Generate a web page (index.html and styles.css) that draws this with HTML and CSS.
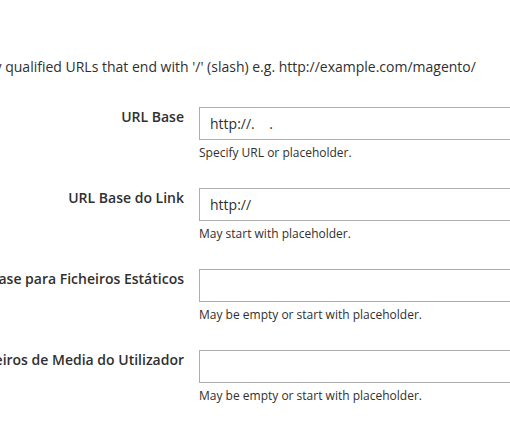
FILE: index.html
```html
<!DOCTYPE html>
<html lang="pt">
<head>
<meta charset="utf-8">
<title>URLs Base</title>
<link rel="stylesheet" href="styles.css">
</head>
<body>
<div class="page">
  <p class="intro">Any of the fields allow fully qualified URLs that end with '/' (slash) e.g. http://example.com/magento/</p>
  <div class="fieldset">
    <div class="field">
      <label class="field-label" for="f1"><span>URL Base</span></label>
      <div class="field-control">
        <input class="input-text" id="f1" type="text" value="http://.    .">
        <div class="note">Specify URL or placeholder.</div>
      </div>
    </div>
    <div class="field">
      <label class="field-label" for="f2"><span>URL Base do Link</span></label>
      <div class="field-control">
        <input class="input-text" id="f2" type="text" value="http://">
        <div class="note">May start with placeholder.</div>
      </div>
    </div>
    <div class="field">
      <label class="field-label" for="f3"><span>URL Base para Ficheiros Estáticos</span></label>
      <div class="field-control">
        <input class="input-text" id="f3" type="text" value="">
        <div class="note">May be empty or start with placeholder.</div>
      </div>
    </div>
    <div class="field">
      <label class="field-label" for="f4"><span>URL Base para Ficheiros de Media do Utilizador</span></label>
      <div class="field-control">
        <input class="input-text" id="f4" type="text" value="">
        <div class="note">May be empty or start with placeholder.</div>
      </div>
    </div>
  </div>
</div>
</body>
</html>
```

FILE: styles.css
```css
html, body {
  margin: 0;
  padding: 0;
  background: #ffffff;
  overflow: hidden;
}

body {
  font-family: "Open Sans", "Liberation Sans", sans-serif;
  color: #303030;
  font-size: 14px;
  line-height: 19px;
}

.page {
  margin-left: -300px;
  width: 900px;
  padding-top: 57px;
}

.intro {
  margin: 0 0 31px 0;
  padding-left: 128px;
  white-space: nowrap;
  color: #303030;
}

.fieldset {
  display: flex;
  flex-direction: column;
  gap: 26px;
}

.field {
  display: grid;
  grid-template-columns: 484px 400px;
  column-gap: 15px;
  align-items: start;
}

.field-label {
  display: flex;
  justify-content: flex-end;
  white-space: nowrap;
  font-weight: 600;
  color: #303030;
  padding-top: 0;
}

.field-control {
  display: flex;
  flex-direction: column;
}

.input-text {
  box-sizing: border-box;
  width: 100%;
  height: 33px;
  margin: 0;
  padding: 0 10px;
  border: 1px solid #adadad;
  border-radius: 0;
  background: #ffffff;
  font-family: "Open Sans", "Liberation Sans", sans-serif;
  font-size: 14px;
  color: #303030;
  outline: none;
}

.note {
  margin-top: 4px;
  font-size: 12px;
  line-height: 18px;
  color: #303030;
}
```
